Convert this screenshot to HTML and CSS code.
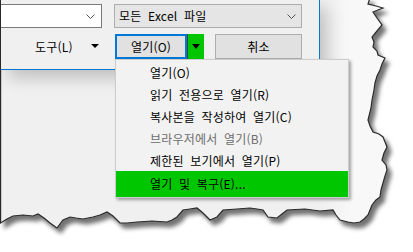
FILE: index.html
```html
<!DOCTYPE html>
<html lang="ko">
<head>
<meta charset="utf-8">
<title>열기</title>
<link rel="stylesheet" href="styles.css">
</head>
<body>
<div class="paper">
  <svg class="edge" width="413" height="252" viewBox="0 0 413 252">
    <defs>
      <filter id="tornShadow" x="-10%" y="-10%" width="130%" height="130%">
        <feDropShadow dx="4" dy="5" stdDeviation="2" flood-color="#000" flood-opacity="0.55"/>
      </filter>
      <linearGradient id="paperFill" x1="0" y1="0" x2="413" y2="0" gradientUnits="userSpaceOnUse">
        <stop offset="0.78" stop-color="#f0f0f0"/>
        <stop offset="0.85" stop-color="#f8f8f8"/>
      </linearGradient>
    </defs>
    <path class="edge-shape" fill="url(#paperFill)" filter="url(#tornShadow)" d="M0.6,-2 L370,-2 L368,4 L376,6 L383,8 L378,10 L373,12 L377,18 L382,25 L377,31 L372,37 L374,42 L373,47 L377,51 L378,55 L385,58 L382,64 L380,70 L377,76 L375,83 L374,90 L372,100 L371,108 L368,120 L370,126 L373,132 L379,134 L383,137 L385,142 L387,147 L384,153 L382,160 L386,165 L387,170 L385,176 L383,183 L381,190 L380,197 L376,200 L372,205 L370,210 L368,215 L364,219 L360,222 L354,223 L348,222 L340,220 L336,215 L333,210 L320,211 L305,209 L287,210 L282,214 L277,218 L268,217 L263,210 L257,209 L250,208 L237,209 L223,210 L217,217 L210,220 L203,213 L197,208 L190,209 L183,210 L177,217 L172,220 L167,222 L152,221 L137,222 L127,223 L120,223 L113,216 L107,212 L100,215 L93,217 L83,219 L76,218 L70,217 L63,220 L57,228 L50,223 L44,218 L38,214 L33,216 L23,215 L13,216 L7,219 L0.6,223 Z"/>
  </svg>
  <div class="sheet">
    <div class="dialog">
      <div class="row row-top">
        <div class="field">
          <svg class="chevron" width="9" height="5" viewBox="0 0 9 5"><polyline points="0.5,0.5 4.5,4.5 8.5,0.5"/></svg>
        </div>
        <div class="combo">
          <span class="combo-text">모든 Excel 파일</span>
          <svg class="chevron" width="9" height="5" viewBox="0 0 9 5"><polyline points="0.5,0.5 4.5,4.5 8.5,0.5"/></svg>
        </div>
      </div>
      <div class="row row-actions">
        <div class="tools"><span>도구(L)</span><span class="caret"></span></div>
        <div class="split">
          <span class="split-main">열기(O)</span>
          <span class="split-arrow"><span class="caret caret-big"></span></span>
        </div>
        <div class="btn">취소</div>
      </div>
    </div>
    <ul class="menu">
      <li class="item">열기(O)</li>
      <li class="item">읽기 전용으로 열기(R)</li>
      <li class="item">복사본을 작성하여 열기(C)</li>
      <li class="item disabled">브라우저에서 열기(B)</li>
      <li class="item">제한된 보기에서 열기(P)</li>
      <li class="item highlight">열기 및 복구(E)...</li>
    </ul>
  </div>
</div>
</body>
</html>
```

FILE: styles.css
```css
html, body {
  margin: 0;
  padding: 0;
  background: #ffffff;
}

body {
  width: 413px;
  height: 252px;
  overflow: hidden;
  font-family: "Noto Sans CJK KR", "Noto Sans", sans-serif;
  font-size: 12px;
  letter-spacing: 0.2px;
  word-spacing: 3px;
  color: #000;
}

.paper {
  position: relative;
  width: 413px;
  height: 252px;
}

.edge {
  position: absolute;
  left: 0;
  top: 0;
  z-index: 0;
}

.edge-shape {
  stroke: #2a2a2a;
  stroke-width: 1.2;
}

.sheet {
  position: relative;
  z-index: 1;
  padding-left: 1px;
}

.dialog {
  box-sizing: border-box;
  width: 319px;
  height: 70px;
  padding-top: 4px;
  background: #f0f0f0;
  border-right: 1px solid #0078d7;
  border-bottom: 1px solid #0078d7;
  box-shadow: 7px 8px 16px rgba(0, 0, 0, 0.2);
}

.row {
  display: flex;
  align-items: flex-start;
}

.row-top {
  height: 24px;
}

.field {
  box-sizing: border-box;
  width: 101px;
  height: 24px;
  background: #fff;
  border: 1px solid #7a7a7a;
  border-left: none;
  display: flex;
  align-items: center;
  justify-content: flex-end;
  padding-right: 6px;
}

.combo {
  box-sizing: border-box;
  margin-left: 12px;
  width: 188px;
  height: 24px;
  background: #e5e5e5;
  border: 1px solid #acacac;
  display: flex;
  align-items: center;
  justify-content: space-between;
  padding: 0 5px 0 4px;
  line-height: 22px;
}

.chevron polyline {
  fill: none;
  stroke: #555;
  stroke-width: 1;
}

.row-actions {
  margin-top: 6px;
  height: 26px;
}

.tools {
  box-sizing: border-box;
  width: 114px;
  height: 25px;
  padding-left: 34px;
  display: flex;
  align-items: center;
  line-height: 25px;
}

.caret {
  display: inline-block;
  width: 0;
  height: 0;
  border-left: 4px solid transparent;
  border-right: 4px solid transparent;
  border-top: 4px solid #000;
}

.tools .caret {
  margin-left: 18px;
  margin-top: -1px;
}

.split {
  display: flex;
  align-items: flex-start;
}

.split-main {
  box-sizing: border-box;
  width: 72px;
  height: 25px;
  border: 2px solid #0078d7;
  background: #e1e1e1;
  text-align: center;
  line-height: 21px;
}

.split-arrow {
  box-sizing: border-box;
  width: 17px;
  height: 26px;
  background: #00c600;
  border-left: 1px solid #3a4a3a;
  display: flex;
  align-items: center;
  justify-content: center;
}

.caret-big {
  border-left-width: 4px;
  border-right-width: 4px;
  border-top-width: 5px;
  margin-top: -1px;
}

.btn {
  box-sizing: border-box;
  margin-left: 11px;
  width: 87px;
  height: 25px;
  border: 1px solid #adadad;
  background: #e1e1e1;
  text-align: center;
  line-height: 23px;
}

.menu {
  position: absolute;
  left: 115px;
  top: 59px;
  box-sizing: border-box;
  width: 234px;
  margin: 0;
  padding: 2px 0 0 0;
  list-style: none;
  background: #f2f2f2;
  border: 1px solid #cccccc;
  box-shadow: 2px 2px 3px rgba(0, 0, 0, 0.35);
}

.item {
  height: 22px;
  line-height: 22px;
  padding-left: 34px;
  white-space: nowrap;
}

.item.disabled {
  color: #6d6d6d;
}

.item.highlight {
  height: 26px;
  line-height: 25px;
  margin-top: -1px;
  background: #00c600;
}
```
